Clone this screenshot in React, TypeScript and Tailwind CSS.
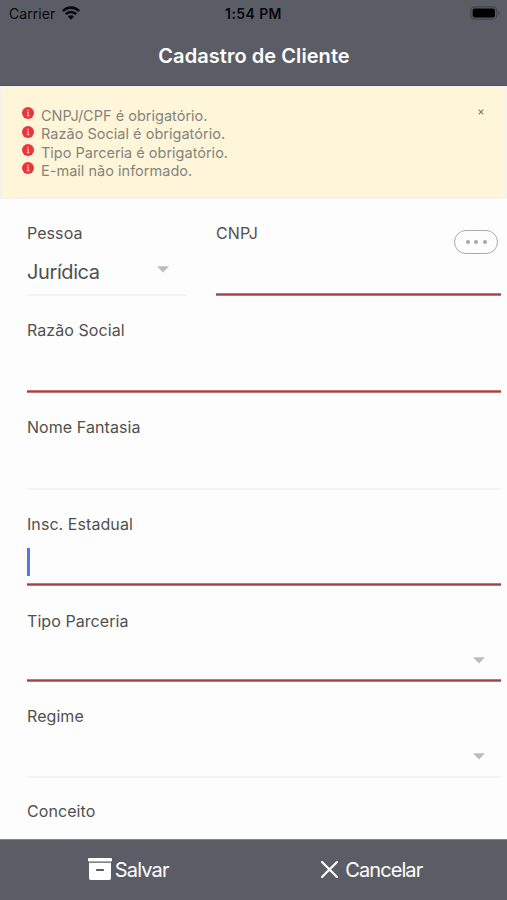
import type { ReactNode } from "react";

const errors = [
  { text: "CNPJ/CPF é obrigatório.", cls: "tracking-[0.01px]" },
  { text: "Razão Social é obrigatório.", cls: "tracking-[0.02px]" },
  { text: "Tipo Parceria é obrigatório.", cls: "tracking-[0px]" },
  { text: "E-mail não informado.", cls: "tracking-[0.02px]" },
];

function Caret() {
  return (
    <svg width="12" height="7" viewBox="0 0 12 7" className="shrink-0">
      <path d="M0 0.3H12L6 6.5Z" fill="#bcbcbc" />
    </svg>
  );
}

function Field({
  label,
  required = false,
  caret = false,
  className = "h-[74px]",
  children,
}: {
  label: string;
  required?: boolean;
  caret?: boolean;
  className?: string;
  children?: ReactNode;
}) {
  return (
    <div className={`flex shrink-0 flex-col ${className}`}>
      <div className="h-[23px] text-[16px] leading-[23px] tracking-[0.07px] text-[#505050]">{label}</div>
      <div className="flex flex-1 items-center">
        {children}
        {caret && (
          <div className="mt-[8px] mr-4 ml-auto flex">
            <Caret />
          </div>
        )}
      </div>
      <div
        className={
          required
            ? "h-[3px] shrink-0 border-y border-[#c57573] bg-[#9e4340]"
            : "h-[2px] shrink-0 bg-[#f3f3f3]"
        }
      />
    </div>
  );
}

export default function App() {
  return (
    <div className="flex h-[900px] w-[507px] flex-col overflow-hidden bg-[#fdfdfd] font-['Inter','Liberation_Sans',sans-serif]">
      <header className="h-[86px] shrink-0 border-b border-[#50525c] bg-[#5b5d66]">
        <div className="grid h-7 grid-cols-3 items-center pr-[7px] pl-[9px] text-[14px] text-[#08080a]">
          <div className="flex items-center gap-[7px]">
            <span className="-mt-px tracking-[0.05px]">Carrier</span>
            <svg width="18" height="14" viewBox="0 0 18 14" className="-mt-[3px]">
              <g fill="none" stroke="currentColor" strokeWidth="2.6">
                <path d="M0.9 5.1C5.3 0.4 12.7 0.4 17.1 5.1" />
                <path d="M3.8 8.2C6.7 5.2 11.3 5.2 14.2 8.2" />
              </g>
              <path d="M5.9 10.4C7.7 8.7 10.3 8.7 12.1 10.4L9 13.7Z" fill="currentColor" />
            </svg>
          </div>
          <span className="-mt-px mr-[2px] text-center text-[14px] font-semibold tracking-[0.4px] whitespace-nowrap">1:54 PM</span>
          <svg width="30" height="14" viewBox="0 0 30 14" className="-mt-[2px] justify-self-end">
            <rect x="0.8" y="0.8" width="26" height="12.4" rx="3.8" fill="none" stroke="#42444b" strokeWidth="1.2" />
            <rect x="2.6" y="2.6" width="22.4" height="8.8" rx="2.2" fill="#000" />
            <path d="M28.2 4.8C30 5.6 30 8.4 28.2 9.2Z" fill="#42444b" />
          </svg>
        </div>
        <h1 className="flex h-[56px] items-center justify-center pl-px text-[20px] font-semibold tracking-[0.06px] text-white">
          Cadastro de Cliente
        </h1>
      </header>

      <section className="flex h-[113px] shrink-0 items-start border-2 border-t border-[#f3f3f3] bg-[#fff6da] pt-[19px] pr-[21px] pl-[20px]">
        <ul>
          {errors.map((e) => (
            <li key={e.text} className="flex h-[18.4px] items-center gap-[7px] text-[14.5px] leading-[18px] text-[#85837b]">
              <svg width="12" height="12" viewBox="0 0 12 12" className="-mt-[4px]">
                <circle cx="6" cy="6" r="6" fill="#ec343b" />
                <path d="M6 2.6V4M5 5.2H6.2V8.6M4.8 8.8H7.4" stroke="#ffc2c2" strokeWidth="1.1" fill="none" />
              </svg>
              <span className={`pt-[1.5px] ${e.cls}`}>{e.text}</span>
            </li>
          ))}
        </ul>
        <svg width="6" height="6" viewBox="0 0 6 6" className="mt-[3px] ml-auto">
          <path d="M0.7 0.7L5.3 5.3M5.3 0.7L0.7 5.3" stroke="#7d796d" strokeWidth="1.1" />
        </svg>
      </section>

      <main className="flex min-h-0 flex-1 flex-col overflow-hidden pt-[23px] pr-[6px] pl-[27px]">
        <div className="flex shrink-0">
          <Field label="Pessoa" className="h-[74px] w-[160px]">
            <span className="mt-[4px] text-[20px] tracking-[-0.4px] text-[#505050]">Jurídica</span>
            <div className="-mt-px mr-[18px] ml-auto flex">
              <Caret />
            </div>
          </Field>
          <div className="relative ml-[29px] flex-1">
            <Field label="CNPJ" required />
            <button className="absolute top-[8px] right-[3px] flex h-[24px] w-[44px] items-center justify-center gap-[4.5px] rounded-full border border-[#aaaaaa]">
              <i className="size-1 rounded-full bg-[#a8a8a8]" />
              <i className="size-1 rounded-full bg-[#a8a8a8]" />
              <i className="size-1 rounded-full bg-[#a8a8a8]" />
            </button>
          </div>
        </div>
        <Field label="Razão Social" required className="mt-[23px] h-[74px]" />
        <Field label="Nome Fantasia" className="mt-[23px] h-[74px]" />
        <Field label="Insc. Estadual" required className="mt-[23px] h-[73px]">
          <div className="mt-[5px] h-[28px] w-[3px] bg-[#5478e4]" />
        </Field>
        <Field label="Tipo Parceria" required caret className="mt-[24px] h-[72px]" />
        <Field label="Regime" caret className="mt-[23px] h-[73px]" />
        <Field label="Conceito" className="mt-[22px] h-[74px]" />
      </main>

      <footer className="flex h-[61px] shrink-0 border-t border-[#85878d] bg-[#5b5d66] text-[20px] text-white">
        <button className="flex w-1/2 items-center justify-center gap-[3px] pb-px pl-[3px]">
          <svg width="24" height="22" viewBox="0 0 24 22" className="-mt-px">
            <rect x="0" y="0" width="24" height="3.6" rx="1" fill="white" />
            <path d="M1 4.8H23V20.2Q23 22 21.2 22H2.8Q1 22 1 20.2Z" fill="white" />
            <path d="M8.8 12H15.2" stroke="#5b5d66" strokeWidth="1.8" strokeLinecap="round" />
          </svg>
          <span className="tracking-[-0.85px]">Salvar</span>
        </button>
        <button className="flex w-1/2 items-center justify-center gap-[7px] pr-[17px] pb-px">
          <svg width="17" height="17" viewBox="0 0 17 17" className="-mt-px">
            <path d="M1 1L16 16M16 1L1 16" stroke="white" strokeWidth="2.2" strokeLinecap="round" />
          </svg>
          <span className="tracking-[-0.9px]">Cancelar</span>
        </button>
      </footer>
    </div>
  );
}
